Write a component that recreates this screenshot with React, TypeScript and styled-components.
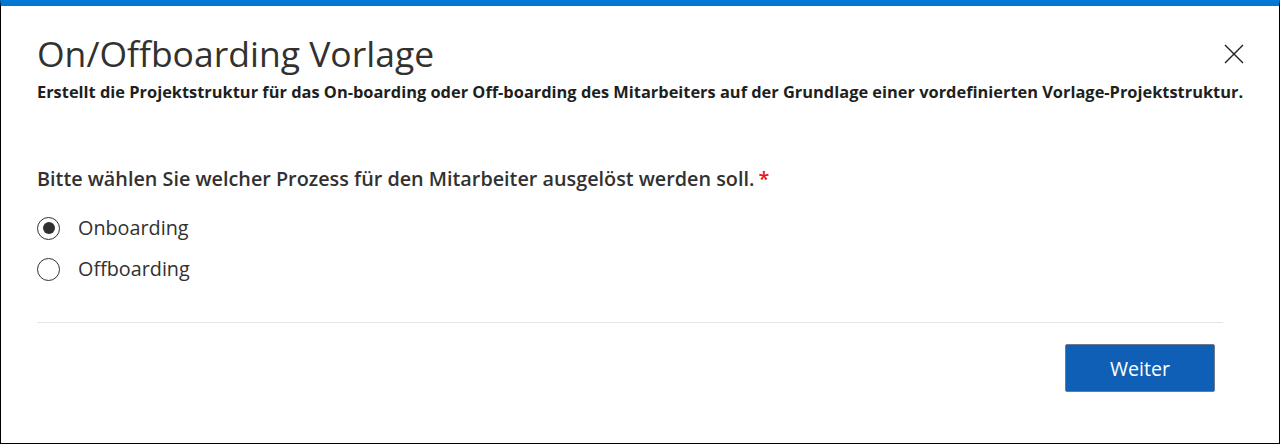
import React, { useState } from "react";
import styled, { createGlobalStyle } from "styled-components";

const Global = createGlobalStyle`
  html, body { margin: 0; padding: 0; background: #fff; }
  * { box-sizing: border-box; }
`;

const Frame = styled.div`
  width: 1280px;
  height: 444px;
  border: 1px solid #000;
  border-top: 6px solid #0078d4;
  background: #fff;
  display: flex;
  flex-direction: column;
  padding: 0 56px 0 36px;
  font-family: "Open Sans", "Noto Sans", sans-serif;
  color: #323130;
`;

const Header = styled.div`
  display: flex;
  align-items: flex-start;
  padding-top: 22px;
  margin-right: -21px;
`;

const TitleBlock = styled.div`
  display: flex;
  flex-direction: column;
  flex: 1;
  min-width: 0;
`;

const Title = styled.h1`
  margin: 0;
  font-size: 35.5px;
  line-height: 50px;
  font-weight: 400;
  color: #323130;
`;

const Subtitle = styled.p`
  margin: 3px 0 0 0;
  font-size: 16.4px;
  line-height: 22px;
  font-weight: 700;
  color: #201f1e;
  white-space: nowrap;
`;

const CloseButton = styled.button`
  flex: none;
  border: none;
  background: transparent;
  padding: 0;
  margin-top: 16px;
  width: 20px;
  height: 20px;
  display: flex;
  align-items: center;
  justify-content: center;
  cursor: pointer;
`;

const Question = styled.div`
  margin-top: 63px;
  font-size: 19.8px;
  line-height: 26px;
  font-weight: 600;
  color: #323130;
`;

const Required = styled.span`
  color: #e81123;
  margin-left: 4px;
`;

const Options = styled.div`
  display: flex;
  flex-direction: column;
  gap: 13px;
  margin-top: 22px;
`;

const OptionRow = styled.label`
  display: flex;
  align-items: center;
  gap: 18px;
  font-size: 19.8px;
  line-height: 28px;
  color: #323130;
  cursor: pointer;
`;

const Circle = styled.span<{ $checked: boolean }>`
  width: 23px;
  height: 23px;
  border-radius: 50%;
  border: 1px solid #323130;
  display: flex;
  align-items: center;
  justify-content: center;
  &::after {
    content: "";
    width: 12px;
    height: 12px;
    border-radius: 50%;
    background: ${(p) => (p.$checked ? "#323130" : "transparent")};
  }
`;

const Divider = styled.hr`
  margin: 39px 0 0 0;
  border: none;
  border-top: 1px solid #e5e5e5;
  width: 1186px;
`;

const Footer = styled.div`
  display: flex;
  justify-content: flex-end;
  padding-top: 21px;
  margin-right: 8px;
`;

const PrimaryButton = styled.button`
  width: 150px;
  height: 48px;
  background: #0f5fb7;
  border: 1px solid #6b7c8f;
  border-radius: 2px;
  color: #fff;
  font-family: "Open Sans", "Noto Sans", sans-serif;
  font-size: 19.6px;
  cursor: pointer;
`;

const options = ["Onboarding", "Offboarding"];

export default function App() {
  const [value, setValue] = useState("Onboarding");
  return (
    <>
      <Global />
      <Frame>
        <Header>
          <TitleBlock>
            <Title>On/Offboarding Vorlage</Title>
            <Subtitle>
              Erstellt die Projektstruktur für das On-boarding oder Off-boarding des Mitarbeiters auf der Grundlage einer vordefinierten Vorlage-Projektstruktur.
            </Subtitle>
          </TitleBlock>
          <CloseButton aria-label="Schließen">
            <svg width="20" height="20" viewBox="0 0 20 20">
              <path d="M1 1 L19 19 M19 1 L1 19" stroke="#201f1e" strokeWidth="1.4" fill="none" />
            </svg>
          </CloseButton>
        </Header>
        <Question>
          Bitte wählen Sie welcher Prozess für den Mitarbeiter ausgelöst werden soll.
          <Required>*</Required>
        </Question>
        <Options>
          {options.map((o) => (
            <OptionRow key={o} onClick={() => setValue(o)}>
              <Circle $checked={value === o} />
              {o}
            </OptionRow>
          ))}
        </Options>
        <Divider />
        <Footer>
          <PrimaryButton>Weiter</PrimaryButton>
        </Footer>
      </Frame>
    </>
  );
}
